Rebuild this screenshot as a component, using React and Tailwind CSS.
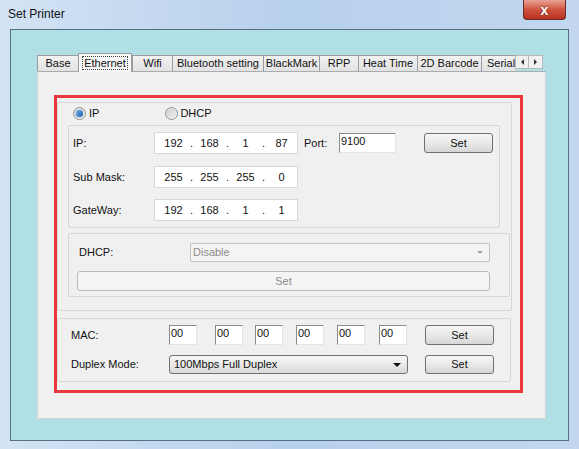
import React from "react";

const font = { fontFamily: '"Liberation Sans", Arial, sans-serif' };

function Btn({ w = "w-[69px]", h = "h-[20px]", children, disabled }) {
  return (
    <div
      className={`${w} ${h} flex items-center justify-center rounded-[3px] border text-[11px] ${
        disabled
          ? "border-[#b6babd] bg-[#f4f4f4] text-[#8a8a8a]"
          : "border-[#707070] bg-gradient-to-b from-[#f6f6f6] via-[#e9e9e9] to-[#d6d6d6] text-[#111]"
      }`}
    >
      {children}
    </div>
  );
}

function IpBox({ parts }) {
  return (
    <div className="w-[144px] h-[22px] border border-[#d5d8dc] bg-white flex items-center pl-[3px] text-[11px] text-[#111]">
      {parts.map((p, i) => (
        <React.Fragment key={i}>
          <div className="w-[31px] text-center">{p}</div>
          {i < 3 && <div className="w-[5px] text-center">.</div>}
        </React.Fragment>
      ))}
    </div>
  );
}

function Sunken({ w, h = "h-[20px]", children }) {
  return (
    <div
      className={`${w} ${h} bg-white border-t border-l border-t-[#8a8a8a] border-l-[#8a8a8a] border-r border-b border-r-[#e4e4e4] border-b-[#e4e4e4] text-[11px] leading-[13px] pl-[1px] pt-[1px] text-[#111]`}
    >
      {children}
    </div>
  );
}

function Radio({ checked }) {
  return (
    <div className="w-[13px] h-[13px] rounded-full border border-[#8e8f8f] bg-gradient-to-br from-[#dcdcdc] to-[#f6f6f6] flex items-center justify-center">
      {checked ? (
        <div className="w-[7px] h-[7px] rounded-full bg-gradient-to-br from-[#6fb2ee] to-[#1c5ea8] shadow-[0_0_1px_#0b3e7a]" />
      ) : (
        <div className="w-[9px] h-[9px] rounded-full bg-gradient-to-br from-[#cfcfcf] to-[#eeeeee]" />
      )}
    </div>
  );
}

const tabs = [
  ["Base", "w-[41px]"],
  ["Ethernet", "w-[54px]"],
  ["Wifi", "w-[40px]"],
  ["Bluetooth setting", "w-[91px]"],
  ["BlackMark", "w-[56px]"],
  ["RPP", "w-[39px]"],
  ["Heat Time", "w-[59px]"],
  ["2D Barcode", "w-[64px]"],
  ["Serial", "w-[34px]"],
];

export default function App() {
  return (
    <div
      className="w-[579px] h-[449px] overflow-hidden bg-gradient-to-r from-[#d3e3f4] via-[#b7d0ec] to-[#c2d7ef]"
      style={font}
    >
      {/* Title bar */}
      <div className="relative h-[29px] flex items-center pl-[8px] pb-[1px]">
        <span className="text-[12px] text-[#111]">Set Printer</span>
        <div className="absolute top-0 left-[523px] w-[43px] h-[20px] rounded-b-[4px] border border-t-0 border-[#6e2a24] bg-gradient-to-b from-[#e6a194] via-[#cf5340] to-[#b8301f] flex items-center justify-center">
          <span className="text-white font-bold text-[14px] leading-none" style={{ textShadow: "0 0 2px #5a1a12" }}>
            x
          </span>
        </div>
      </div>

      {/* Client */}
      <div className="ml-[10px] w-[559px] h-[412px] border border-[#55707f] bg-[#b0dfe5] pt-[23px] pl-[26px]">
        <div className="w-[509px]">
          {/* Tab strip */}
          <div className="relative h-[18px] flex items-end">
            {tabs.map(([t, w]) =>
              t === "Ethernet" ? (
                <div
                  key={t}
                  className={`${w} h-[19px] -mb-[1px] relative z-10 bg-[#f7f7f7] border border-b-0 border-[#9a9ca0] flex items-start justify-center pt-[2px]`}
                >
                  <span className="text-[11px] leading-[12px] px-[1px] border border-dotted border-[#444] text-[#111]">
                    {t}
                  </span>
                </div>
              ) : (
                <div
                  key={t}
                  className={`${w} h-[16px] overflow-hidden whitespace-nowrap bg-gradient-to-b from-[#f2f2f2] to-[#e2e2e2] border border-b-0 border-r-0 border-[#9a9ca0] flex items-center ${
                    t === "Serial" ? "justify-start pl-[5px]" : "justify-center"
                  } text-[11px] text-[#111]`}
                >
                  {t}
                </div>
              )
            )}
            <div className="absolute left-[478px] bottom-[2px] flex">
              <div className="w-[14px] h-[14px] bg-[#f1f1f1] border border-[#b9b9b9] flex items-center justify-center">
                <div className="w-0 h-0 border-y-[3px] border-y-transparent border-r-[3px] border-r-[#333]" />
              </div>
              <div className="w-[14px] h-[14px] bg-[#f1f1f1] border border-l-0 border-[#b9b9b9] flex items-center justify-center">
                <div className="w-0 h-0 border-y-[3px] border-y-transparent border-l-[3px] border-l-[#333]" />
              </div>
            </div>
          </div>

          {/* Panel */}
          <div className="w-[509px] h-[348px] bg-[#f0f0f0] border border-[#d4d4d4] border-t-[#a9abaf] pt-[23px] pl-[16px]">
            <div className="w-[469px] h-[298px] border-[3px] border-[#e8383d] text-[11px] text-[#111]">
              {/* Group 1 */}
              <div className="mt-[4px] w-[455px] h-[209px] border border-[#d6d6d6] rounded-[2px]">
                <div className="h-[20px] flex items-center pl-[15px]">
                  <Radio checked />
                  <span className="ml-[3px]">IP</span>
                  <div className="ml-[66px]">
                    <Radio />
                  </div>
                  <span className="ml-[2px]">DHCP</span>
                </div>

                {/* Group 2 */}
                <div className="ml-[10px] mt-[2px] w-[432px] h-[103px] border border-[#d6d6d6] rounded-[2px] pl-[4px]">
                  <div className="mt-[6px] flex items-center">
                    <div className="w-[81px]">IP:</div>
                    <IpBox parts={["192", "168", "1", "87"]} />
                    <div className="w-[35px] ml-[6px]">Port:</div>
                    <Sunken w="w-[57px]">9100</Sunken>
                    <div className="ml-[28px]">
                      <Btn>Set</Btn>
                    </div>
                  </div>
                  <div className="mt-[12px] flex items-center">
                    <div className="w-[81px]">Sub Mask:</div>
                    <IpBox parts={["255", "255", "255", "0"]} />
                  </div>
                  <div className="mt-[11px] flex items-center">
                    <div className="w-[81px]">GateWay:</div>
                    <IpBox parts={["192", "168", "1", "1"]} />
                  </div>
                </div>

                {/* DHCP group */}
                <div className="ml-[10px] mt-[5px] w-[442px] h-[64px] border border-[#d6d6d6] rounded-[2px]">
                  <div className="mt-[9px] flex items-center pl-[10px]">
                    <div className="w-[111px]">DHCP:</div>
                    <div className="w-[300px] h-[19px] rounded-[2px] border border-[#c3c3c3] bg-[#f4f4f4] flex items-center justify-between pl-[2px] pr-[6px] text-[#8d8d8d]">
                      <span>Disable</span>
                      <div className="w-0 h-0 border-x-[3px] border-x-transparent border-t-[3px] border-t-[#a0a0a0]" />
                    </div>
                  </div>
                  <div className="mt-[9px] ml-[8px]">
                    <Btn w="w-[413px]" disabled>
                      Set
                    </Btn>
                  </div>
                </div>
              </div>

              {/* Group 3 */}
              <div className="mt-[7px] w-[454px] h-[64px] border border-[#d6d6d6] rounded-[2px] pl-[13px]">
                <div className="mt-[6px] flex items-center">
                  <div className="w-[98px]">MAC:</div>
                  <Sunken w="w-[28px]">00</Sunken>
                  <div className="ml-[18px]"><Sunken w="w-[28px]">00</Sunken></div>
                  <div className="ml-[12px]"><Sunken w="w-[28px]">00</Sunken></div>
                  <div className="ml-[13px]"><Sunken w="w-[28px]">00</Sunken></div>
                  <div className="ml-[13px]"><Sunken w="w-[28px]">00</Sunken></div>
                  <div className="ml-[14px]"><Sunken w="w-[28px]">00</Sunken></div>
                  <div className="ml-[18px]">
                    <Btn>Set</Btn>
                  </div>
                </div>
                <div className="mt-[10px] flex items-center">
                  <div className="w-[98px]">Duplex Mode:</div>
                  <div className="w-[239px] h-[19px] rounded-[3px] border border-[#707070] bg-gradient-to-b from-[#f6f6f6] via-[#e9e9e9] to-[#d8d8d8] flex items-center justify-between pl-[4px] pr-[6px]">
                    <span>100Mbps Full Duplex</span>
                    <div className="w-0 h-0 border-x-[4px] border-x-transparent border-t-[4px] border-t-[#111]" />
                  </div>
                  <div className="ml-[17px]">
                    <Btn h="h-[19px]">Set</Btn>
                  </div>
                </div>
              </div>
            </div>
          </div>
        </div>
      </div>
    </div>
  );
}
